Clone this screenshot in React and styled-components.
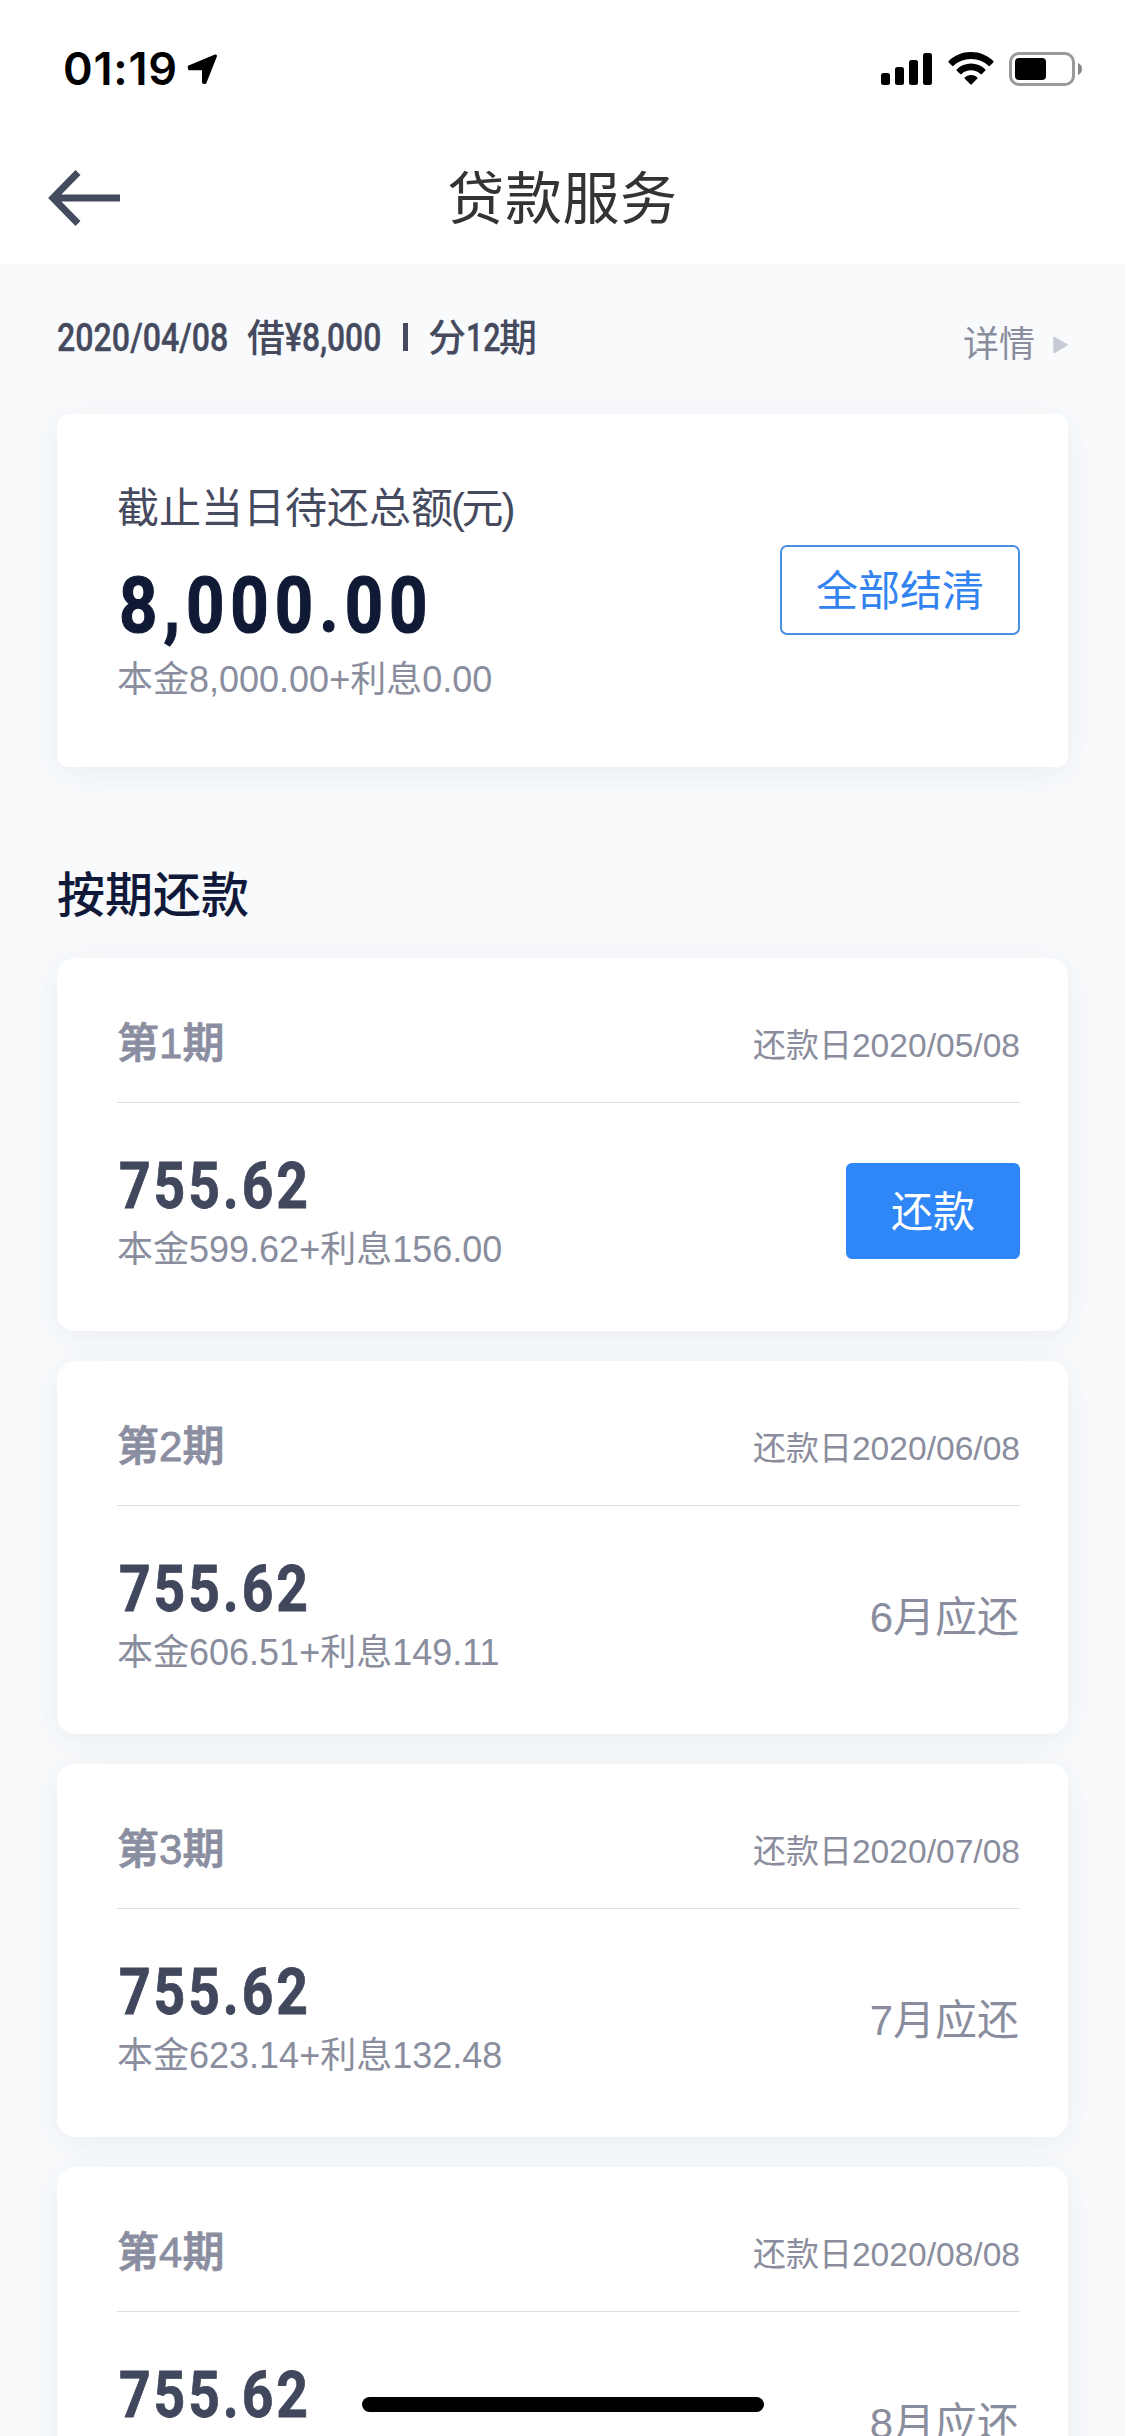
import React from "react";
import styled, { createGlobalStyle } from "styled-components";

const GlobalStyle = createGlobalStyle`
  * { box-sizing: border-box; }
  html, body { margin: 0; padding: 0; }
  body {
    background: #f8fafc;
    font-family: "Liberation Sans", "Noto Sans CJK SC", sans-serif;
    color: #454a5e;
  }
`;

const Screen = styled.div`
  position: relative;
  width: 1125px;
  height: 2436px;
  overflow: hidden;
  background: #f8fafc;
  display: flex;
  flex-direction: column;
`;

const Header = styled.header`
  flex: none;
  height: 264px;
  background: #fff;
`;

const StatusBar = styled.div`
  height: 132px;
  padding: 6px 42px 0 63px;
  display: flex;
  align-items: center;
  justify-content: space-between;
`;

const Clock = styled.div`
  display: flex;
  align-items: center;
  gap: 9px;
`;

const Time = styled.span`
  font: 600 45px/60px Inter, sans-serif;
  letter-spacing: 0.8px;
  color: #000;
`;

const StatusIcons = styled.div`
  display: flex;
  align-items: center;
  gap: 15px;
`;

const NavBar = styled.nav`
  height: 132px;
  display: grid;
  grid-template-columns: 200px 1fr 200px;
  align-items: center;
`;

const BackButton = styled.button`
  width: 80px;
  height: 60px;
  margin: 0 0 0 47px;
  padding: 0;
  border: 0;
  background: none;
`;

const Title = styled.h1`
  margin: 2px 0 0;
  text-align: center;
  font-size: 57px;
  line-height: 80px;
  font-weight: 400;
  letter-spacing: 0.6px;
  color: #333;
`;

const Content = styled.main`
  flex: none;
  padding: 0 57px;
`;

const LoanRow = styled.div`
  height: 150px;
  padding-top: 46px;
  display: flex;
  justify-content: space-between;
`;

const LoanInfo = styled.div`
  display: flex;
  font-size: 38px;
  line-height: 56px;
  font-weight: 500;
  white-space: pre;
`;

const Din = styled.span`
  display: block;
  width: ${(p) => p.$width}px;
  font-family: Roboto, sans-serif;
  font-size: ${(p) => p.$size}px;
  font-weight: ${(p) => p.$weight || 500};
  letter-spacing: ${(p) => p.$spacing || 0}px;
  -webkit-text-stroke: ${(p) => p.$stroke || 0}px currentColor;
  white-space: nowrap;
  transform: scaleX(${(p) => p.$squeeze});
  transform-origin: left center;
`;

const Bar = styled.span`
  width: 5px;
  height: 28px;
  margin: 13px 20px 0 21px;
  background: #454a5e;
`;

const DetailLink = styled.a`
  display: flex;
  align-items: center;
  gap: 17px;
  height: 56px;
  margin: 7px -1px 0 0;
  font-size: 36px;
  line-height: 52px;
  color: #8a8d9d;
`;

const LinkText = styled.span`
  margin-top: -1px;
`;

const Card = styled.section`
  background: #fff;
  border-radius: ${(p) => p.$radius}px;
  box-shadow: 0 6px 30px rgba(60, 64, 80, 0.07);
`;

const TotalCard = styled(Card)`
  height: 353px;
  padding: 65px 48px 0 60px;
  display: flex;
  justify-content: space-between;
`;

const TotalLabel = styled.div`
  font-size: 42px;
  line-height: 60px;
`;

const Paren = styled.span`
  margin-left: -2px;
  letter-spacing: -3.5px;
`;

const TotalAmount = styled.div`
  height: 116px;
  padding-left: 2px;
  line-height: 134px;
  color: #101a35;
`;

const Breakdown = styled.div`
  font-size: 36px;
  line-height: 50px;
  color: #8a8d9d;
`;

const SettleButton = styled.button`
  width: 240px;
  height: 90px;
  margin-top: 66px;
  padding: 0 0 5px;
  border: 2px solid #4a8fe2;
  border-radius: 7px;
  background: #fff;
  color: #3283f0;
  font: inherit;
  font-size: 42px;
`;

const SectionTitle = styled.h2`
  margin: 0;
  height: 191px;
  padding-top: 97px;
  font-size: 48px;
  line-height: 64px;
  font-weight: 500;
  color: #11193a;
`;

const List = styled.div`
  display: flex;
  flex-direction: column;
  gap: 30px;
`;

const PeriodCard = styled(Card)`
  height: 373px;
  padding: 0 48px 0 60px;
`;

const PeriodHead = styled.div`
  height: 145px;
  padding-top: 20px;
  border-bottom: 1px solid #dfe0e4;
  display: flex;
  align-items: center;
  justify-content: space-between;
`;

const PeriodName = styled.span`
  margin-top: -2px;
  font-size: 42px;
  font-weight: 500;
  -webkit-text-stroke: 0.8px #8a8ea0;
  color: #8a8ea0;
`;

const DueDate = styled.span`
  padding-top: 5px;
  font-size: 33px;
  color: #8a8d9d;
`;

const DueDigits = styled.span`
  font-size: 33.6px;
`;

const PeriodBody = styled.div`
  display: flex;
  justify-content: space-between;
`;

const Amount = styled.div`
  height: 122px;
  padding: 43px 0 0 2px;
  line-height: 80px;
  color: #41475c;
`;

const PayButton = styled.button`
  width: 174px;
  height: 96px;
  margin-top: 60px;
  padding: 0 0 5px;
  border: 0;
  border-radius: 6px;
  background: #2f86f6;
  color: #fff;
  font: inherit;
  font-size: 42px;
`;

const Pending = styled.span`
  margin: 80px 1px 0 0;
  font-size: 42px;
  line-height: 64px;
  color: #8a8d9d;
`;

const HomeIndicator = styled.div`
  position: absolute;
  left: 362px;
  bottom: 24px;
  width: 402px;
  height: 15px;
  border-radius: 8px;
  background: #000;
`;

const LocationIcon = () => (
  <svg width="31" height="31" viewBox="0 0 31 31">
    <path d="M28.500 2L18 28.500l-1.500-.3V14.800H2.600L2.200 13z" fill="#000" stroke="#000" strokeWidth="3" strokeLinejoin="round" />
  </svg>
);

const SignalIcon = () => (
  <svg width="52" height="34" viewBox="0 0 52 34">
    <rect x="0" y="21" width="9" height="12" rx="2.500" />
    <rect x="14" y="15" width="9" height="18" rx="2.500" />
    <rect x="28" y="8" width="9" height="25" rx="2.500" />
    <rect x="42" y="1" width="9" height="32" rx="2.500" />
  </svg>
);

const WifiIcon = () => (
  <svg width="46" height="34" viewBox="0 0 46 34">
    <path d="M23 0C31.700 0 39.600 3.400 45.300 9a1 1 0 0 1 0 1.400l-3.400 3.400a1 1 0 0 1-1.400 0A25 25 0 0 0 23 7a25 25 0 0 0-17.500 6.800 1 1 0 0 1-1.400 0L.7 10.400a1 1 0 0 1 0-1.400C6.400 3.400 14.300 0 23 0z" />
    <path d="M23 11.600c5.500 0 10.500 2.100 14.200 5.600a1 1 0 0 1 0 1.500l-3.400 3.300a1 1 0 0 1-1.400 0 13.700 13.700 0 0 0-18.800 0 1 1 0 0 1-1.400 0l-3.400-3.300a1 1 0 0 1 0-1.500c3.700-3.500 8.700-5.600 14.200-5.600z" />
    <path d="M23 23c2.300 0 4.400.8 6.100 2.200a1 1 0 0 1 .1 1.500l-5.500 5.600a1 1 0 0 1-1.400 0l-5.500-5.600a1 1 0 0 1 .1-1.500A9.600 9.600 0 0 1 23 23z" />
  </svg>
);

const BatteryIcon = () => (
  <svg width="74" height="34" viewBox="0 0 74 34">
    <rect x="1.500" y="1.500" width="63" height="31" rx="8.500" fill="none" stroke="#999" strokeWidth="3" />
    <rect x="6" y="6" width="31" height="22" rx="4" fill="#000" />
    <path d="M69 11c2.600 1 4 3.300 4 6s-1.400 5-4 6z" fill="#888" />
  </svg>
);

const BackIcon = () => (
  <svg width="80" height="60" viewBox="0 0 80 60" fill="none" stroke="#454b5f" strokeWidth="7">
    <path d="M73 30H8M31 4.500L6 30l25 25.500" />
  </svg>
);

const CaretIcon = () => (
  <svg width="17" height="18" viewBox="0 0 17 18">
    <path d="M2 1.500l13 7.500-13 7.500z" fill="#c8cad5" stroke="#c8cad5" strokeWidth="1.500" strokeLinejoin="round" />
  </svg>
);

const periods = [
  { no: 1, due: "2020/05/08", principal: "599.62", interest: "156.00", payable: true },
  { no: 2, due: "2020/06/08", principal: "606.51", interest: "149.11", month: 6 },
  { no: 3, due: "2020/07/08", principal: "623.14", interest: "132.48", month: 7 },
  { no: 4, due: "2020/08/08", month: 8 },
];

export default function App() {
  return (
    <Screen>
      <GlobalStyle />
      <Header>
        <StatusBar>
          <Clock>
            <Time>01:19</Time>
            <LocationIcon />
          </Clock>
          <StatusIcons>
            <SignalIcon />
            <WifiIcon />
            <BatteryIcon />
          </StatusIcons>
        </StatusBar>
        <NavBar>
          <BackButton aria-label="返回">
            <BackIcon />
          </BackButton>
          <Title>贷款服务</Title>
        </NavBar>
      </Header>
      <Content>
        <LoanRow>
          <LoanInfo>
            <Din $size={39} $squeeze={0.825} $stroke={0.4} $width={190}>2020/04/08</Din>
            借
            <Din $size={39} $squeeze={0.815} $stroke={0.4} $width={97}>¥8,000</Din>
            <Bar />
            分
            <Din $size={39} $squeeze={0.78} $stroke={0.4} $width={33}>12</Din>
            期
          </LoanInfo>
          <DetailLink>
            <LinkText>详情</LinkText>
            <CaretIcon />
          </DetailLink>
        </LoanRow>
        <TotalCard $radius={12}>
          <div>
            <TotalLabel>
              截止当日待还总额<Paren>(</Paren>元<Paren>)</Paren>
            </TotalLabel>
            <TotalAmount>
              <Din $size={77} $weight={700} $squeeze={0.87} $spacing={6.900} $stroke={1.200} $width={320}>8,000.00</Din>
            </TotalAmount>
            <Breakdown>本金8,000.00+利息0.00</Breakdown>
          </div>
          <SettleButton>全部结清</SettleButton>
        </TotalCard>
        <SectionTitle>按期还款</SectionTitle>
        <List>
          {periods.map((p) => (
            <PeriodCard key={p.no} $radius={18}>
              <PeriodHead>
                <PeriodName>第{p.no}期</PeriodName>
                <DueDate>
                  还款日<DueDigits>{p.due}</DueDigits>
                </DueDate>
              </PeriodHead>
              <PeriodBody>
                <div>
                  <Amount>
                    <Din $size={65} $weight={700} $squeeze={0.85} $spacing={3.400} $stroke={0.8} $width={200}>755.62</Din>
                  </Amount>
                  {p.principal && (
                    <Breakdown>
                      本金{p.principal}+利息{p.interest}
                    </Breakdown>
                  )}
                </div>
                {p.payable ? <PayButton>还款</PayButton> : <Pending>{p.month}月应还</Pending>}
              </PeriodBody>
            </PeriodCard>
          ))}
        </List>
      </Content>
      <HomeIndicator />
    </Screen>
  );
}
